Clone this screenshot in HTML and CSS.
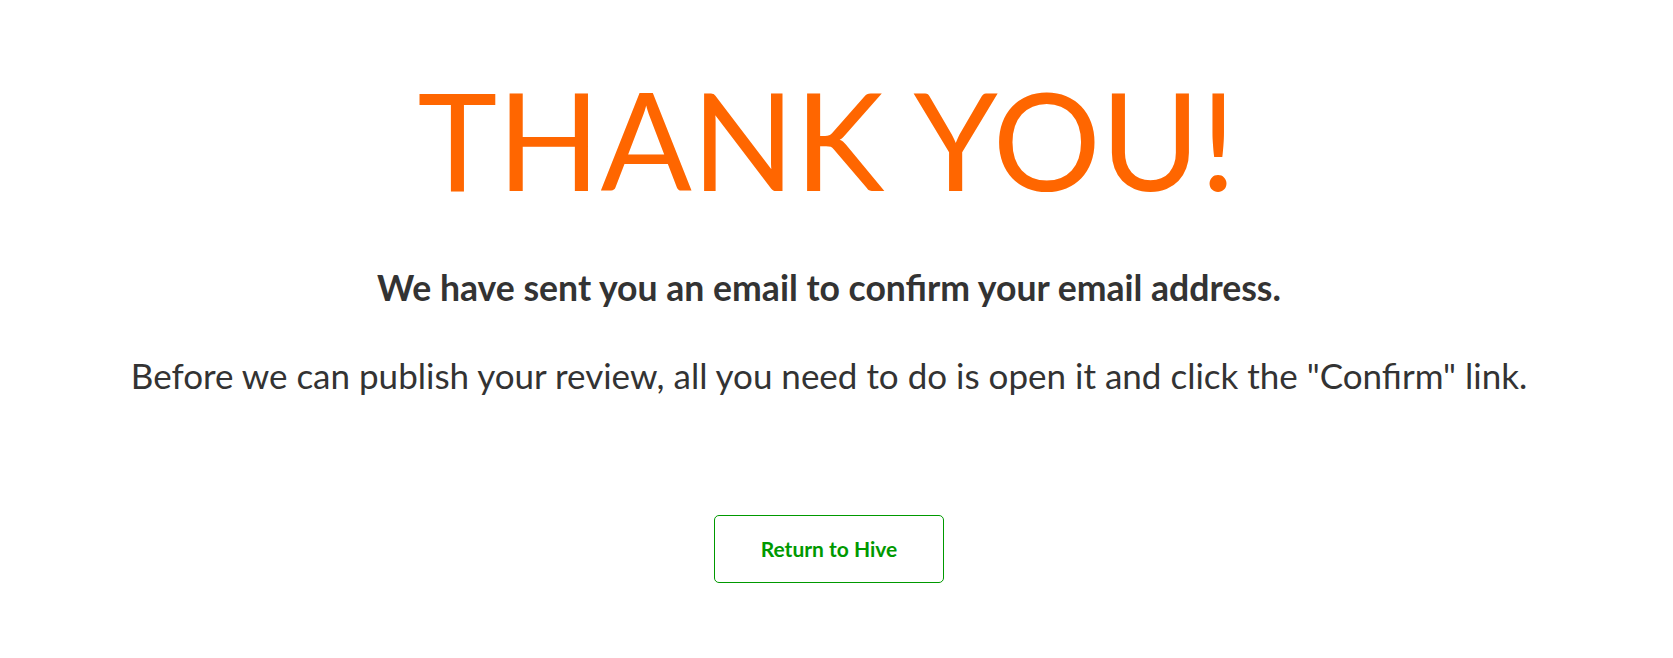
FILE: index.html
```html
<!DOCTYPE html>
<html lang="en">

<head>
  <meta charset="UTF-8" />
  <meta name="viewport" content="width=device-width, initial-scale=1.0" />
  <title>Thank you</title>
  <link rel="stylesheet" href="styles.css">
</head>

<body>

  <main class="thanks">
    <h1 class="thanks-title">THANK YOU!</h1>
    <p class="thanks-lead">We have sent you an email to confirm your email address.</p>
    <p class="thanks-text">Before we can publish your review, all you need to do is open it and click the "Confirm" link.</p>
    <a class="btn-outline" href="#">Return to Hive</a>
  </main>

</body>

</html>
```

FILE: styles.css
```css
* {
  box-sizing: border-box;
  margin: 0;
  padding: 0;
}
:root {
  --orange: #ff6600;
  --text: #333333;
  --green: #009900;
}
body {
  background-color: #ffffff;
  color: var(--text);
  font-family: Lato, "Open Sans", sans-serif;
}
.thanks {
  display: flex;
  flex-direction: column;
  align-items: center;
  padding: 72px 0 0;
  margin-right: 15px;
  text-align: center;
}
.thanks-title {
  color: var(--orange);
  font-size: 135px;
  font-weight: 400;
  line-height: 1;
  padding-right: 4px;
}
.thanks-lead {
  font-size: 35.6px;
  font-weight: 700;
  line-height: 1.2;
  margin-top: 60px;
}
.thanks-text {
  font-size: 35px;
  font-weight: 400;
  line-height: 1.2;
  margin-top: 44px;
}
.btn-outline {
  border: 1px solid var(--green);
  border-radius: 5px;
  color: var(--green);
  display: flex;
  align-items: center;
  justify-content: center;
  font-size: 21px;
  font-weight: 700;
  height: 68px;
  margin-top: 119px;
  text-decoration: none;
  width: 230px;
}
```
